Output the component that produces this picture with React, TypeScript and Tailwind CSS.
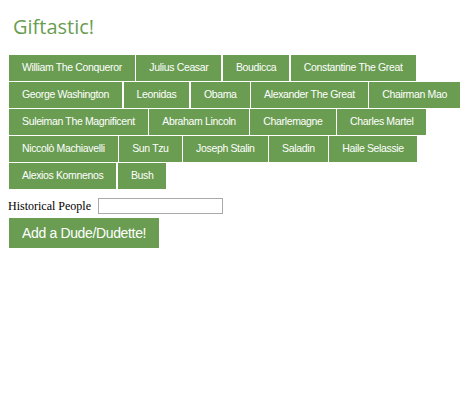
import React from "react";

const people = [
  "William The Conqueror",
  "Julius Ceasar",
  "Boudicca",
  "Constantine The Great",
  "George Washington",
  "Leonidas",
  "Obama",
  "Alexander The Great",
  "Chairman Mao",
  "Suleiman The Magnificent",
  "Abraham Lincoln",
  "Charlemagne",
  "Charles Martel",
  "Niccolò Machiavelli",
  "Sun Tzu",
  "Joseph Stalin",
  "Saladin",
  "Haile Selassie",
  "Alexios Komnenos",
  "Bush",
];

export default function App() {
  return (
    <div className="min-h-screen bg-white p-2 font-['Liberation_Serif',serif] text-black">
      {/* Title */}
      <h1 className="pl-[5px] pt-[7px] h-[47px] text-[20px] leading-[24px] text-[#6a9d52] font-['Open_Sans',sans-serif]">
        Giftastic!
      </h1>

      {/* Person buttons */}
      <div className="flex flex-wrap gap-x-[1.5px] gap-y-[1px] pl-px w-[452px]">
        {people.map((p) => (
          <button
            key={p}
            className="h-[26px] px-[13px] bg-[#6a9d52] text-white text-[10.5px] tracking-[-0.35px] font-['Liberation_Sans',sans-serif]"
          >
            {p}
          </button>
        ))}
      </div>

      {/* Add form */}
      <div className="mt-[9px] flex items-center h-[16px] text-[12px]">
        <label>Historical People</label>
        <input
          type="text"
          className="ml-[7px] w-[125px] h-[16px] border border-[#a9a9a9] bg-white"
        />
      </div>
      <button className="mt-[4px] ml-px h-[30px] px-[13px] bg-[#6a9d52] text-white text-[14px] tracking-[-0.35px] font-['Liberation_Sans',sans-serif]">
        Add a Dude/Dudette!
      </button>
    </div>
  );
}
